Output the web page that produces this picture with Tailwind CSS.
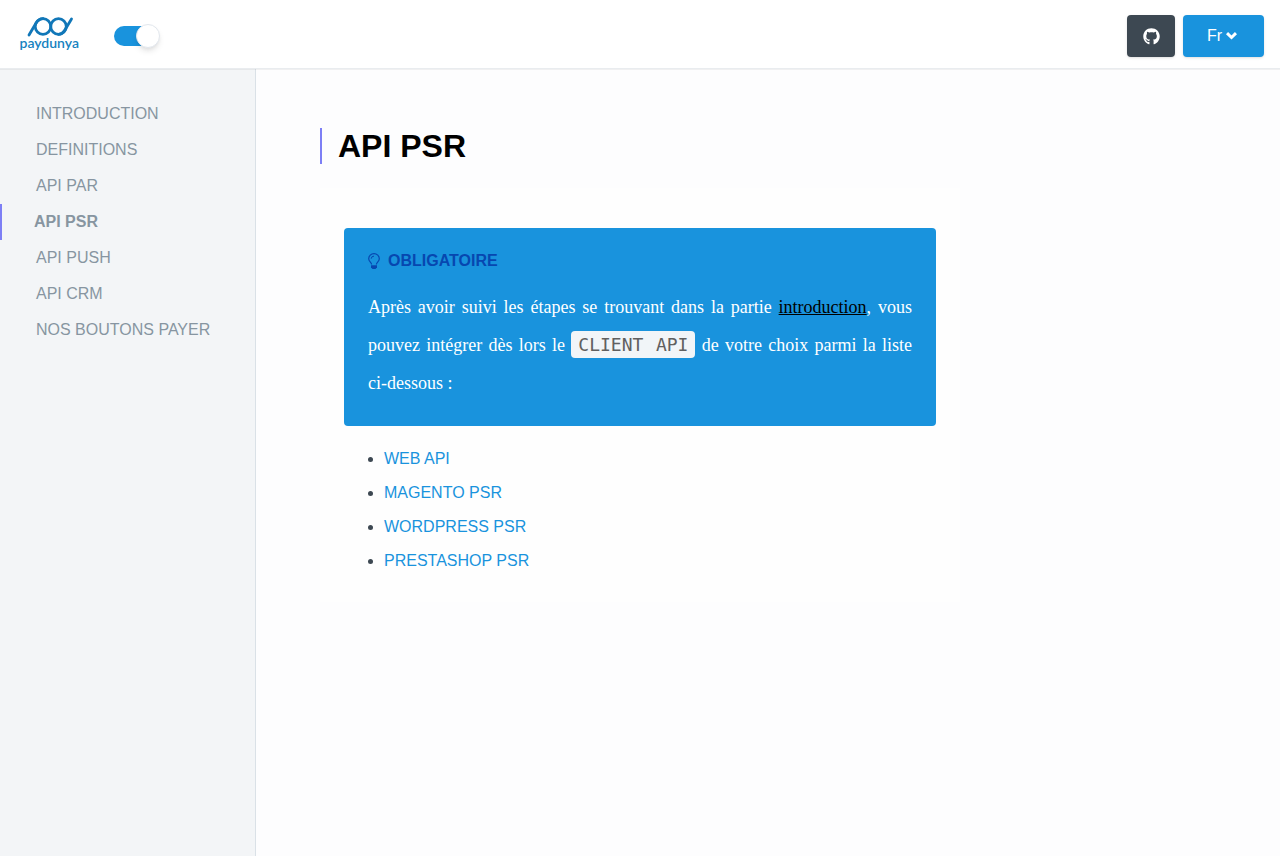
<!DOCTYPE html>
<html lang="fr">
<head>
<meta charset="utf-8">
<meta name="viewport" content="width=device-width, initial-scale=1">
<title>API PSR - PayDunya</title>
<script src="https://cdn.jsdelivr.net/npm/@tailwindcss/browser@4"></script>
</head>
<body class="flex min-h-screen flex-col bg-[#fdfdfe] font-['Liberation_Sans',Arial,sans-serif] text-base text-[#3d4852]">
<header class="relative flex h-[69px] items-center justify-between border-b border-[#e9ecef] bg-white pr-4 pl-5 shadow-2xs">
  <div class="flex items-center gap-[34px]">
    <a href="#" aria-label="PayDunya">
      <svg class="block h-10 w-[60px] overflow-visible" viewBox="0 0 60 40" fill="none">
        <g stroke="#1177b8" stroke-width="2.8" stroke-linecap="round">
          <circle cx="23" cy="12.500" r="7.800"/>
          <circle cx="38.500" cy="12.500" r="7.800"/>
          <path d="M9 21L15.500 10Q18.500 4.700 23 4.700M38.500 20.300Q42.500 20.300 45.500 15L51.500 5"/>
        </g>
        <text x="-0.500" y="34" font-family="Lato, sans-serif" font-size="14" font-weight="600" fill="#1682bf">paydunya</text>
      </svg>
    </a>
    <input type="checkbox" role="switch" checked aria-label="Afficher le menu" class="relative mt-1 h-5 w-11 cursor-pointer appearance-none rounded-full bg-[#b8c2cc] checked:bg-[#1993dd] before:absolute before:-top-0.5 before:left-0 before:size-6 before:rounded-full before:border before:border-[#e2e7ed] before:bg-white before:shadow-md before:content-[''] checked:before:left-[22px]">
  </div>
  <div class="mt-1 flex gap-2">
    <a href="#" aria-label="GitHub" class="flex h-[42px] w-12 items-center justify-center rounded-[4px] bg-[#3d4852] shadow">
      <svg class="size-[17px]" viewBox="0 0 496 512" fill="white"><path d="M165.900 397.400c0 2-2.300 3.600-5.200 3.600-3.300.3-5.600-1.300-5.600-3.600 0-2 2.300-3.600 5.200-3.600 3-.3 5.600 1.300 5.600 3.600zM244.800 8C106.100 8 0 113.300 0 252c0 110.900 69.800 205.800 169.500 239.200 12.800 2.300 17.300-5.600 17.300-12.100 0-6.200-.3-40.400-.3-61.400 0 0-70 15-84.700-29.800 0 0-11.400-29.100-27.800-36.600 0 0-22.900-15.700 1.600-15.400 0 0 24.900 2 38.600 25.800 21.900 38.600 58.600 27.500 72.900 20.900 2.300-16 8.800-27.100 16-33.700-55.900-6.200-112.300-14.300-112.300-110.500 0-27.500 7.600-41.300 23.600-58.900-2.600-6.500-11.100-33.300 2.600-67.900 20.900-6.500 69 27 69 27 20-5.600 41.500-8.500 62.800-8.500s42.800 2.900 62.800 8.500c0 0 48.100-33.600 69-27 13.700 34.700 5.200 61.400 2.600 67.900 16 17.700 25.800 31.500 25.800 58.900 0 96.500-58.900 104.200-114.800 110.500 9.200 7.900 17 22.900 17 46.400 0 33.700-.3 75.400-.3 83.600 0 6.500 4.600 14.400 17.300 12.100C428.200 457.800 496 362.900 496 252 496 113.300 383.500 8 244.800 8z"/></svg>
    </a>
    <button type="button" class="flex h-[42px] w-[81px] cursor-pointer items-center gap-1 rounded-[4px] bg-[#1993dd] pl-6 text-white shadow">
      Fr
      <svg class="h-2 w-[11px]" viewBox="0 0 11 8" fill="none" stroke="white" stroke-width="3"><path d="M1 1.200L5.500 5.500L10 1.200"/></svg>
    </button>
  </div>
</header>
<div class="flex grow">
  <nav class="w-64 shrink-0 border-r border-[#dae1e7] bg-[#f3f5f7] pt-[27px] text-[#8795a1]">
    <ul class="leading-9">
      <li><a href="#" class="block pl-9">INTRODUCTION</a></li>
      <li><a href="#" class="block pl-9">DEFINITIONS</a></li>
      <li><a href="#" class="block pl-9">API PAR</a></li>
      <li><a href="#" aria-current="page" class="block border-l-2 border-[#7d7ff5] pl-8 font-bold">API PSR</a></li>
      <li><a href="#" class="block pl-9">API PUSH</a></li>
      <li><a href="#" class="block pl-9">API CRM</a></li>
      <li><a href="#" class="block pl-9">NOS BOUTONS PAYER</a></li>
    </ul>
  </nav>
  <main class="min-w-0 grow px-16 pt-[59px]">
    <div class="max-w-[640px]">
      <h1 class="border-l-2 border-[#7d7ff5] pl-4 text-[32px] leading-9 font-bold text-black">API PSR</h1>
      <article class="mt-6 bg-[#fefefe] px-6 pt-10 pb-6">
        <section class="rounded-[4px] bg-[#1993dd] px-6 pt-5 pb-6">
          <h2 class="mb-[14px] flex items-center gap-2 leading-[26px] font-bold text-[#0747b0]">
            <svg class="h-4 w-3" viewBox="0 0 12 16" fill="none" stroke="#0747b0"><path stroke-width="1.200" d="M3.600 11.500C3.600 9.500 .7 8.600 .7 5.700A5.300 5 0 0 1 11.300 5.700C11.300 8.600 8.400 9.500 8.400 11.500"/><path stroke-width="1" d="M3.200 5.700Q3.300 3.200 6 3.100"/><path fill="#0747b0" stroke="none" d="M3 12.200h6v2L7.500 16h-3L3 14.200z"/></svg>
            OBLIGATOIRE
          </h2>
          <p class="text-justify font-['Liberation_Serif',serif] text-[18px] leading-[38px] text-white">Après avoir suivi les étapes se trouvant dans la partie <a href="#" class="text-black underline">introduction</a>, vous pouvez intégrer dès lors le <code class="rounded-[4px] bg-[#f1f5f8] px-[7px] py-[3px] font-['DejaVu_Sans_Mono',monospace] text-[18px] leading-none whitespace-nowrap text-[#606060]">CLIENT API</code> de votre choix parmi la liste <span class="whitespace-nowrap">ci-dessous :</span></p>
        </section>
        <ul class="list-disc pt-4 pl-10 leading-[34px]">
          <li><a href="#" class="text-[#1993dd]">WEB API</a></li>
          <li><a href="#" class="text-[#1993dd]">MAGENTO PSR</a></li>
          <li><a href="#" class="text-[#1993dd]">WORDPRESS PSR</a></li>
          <li><a href="#" class="text-[#1993dd]">PRESTASHOP PSR</a></li>
        </ul>
      </article>
    </div>
  </main>
</div>
</body>
</html>
